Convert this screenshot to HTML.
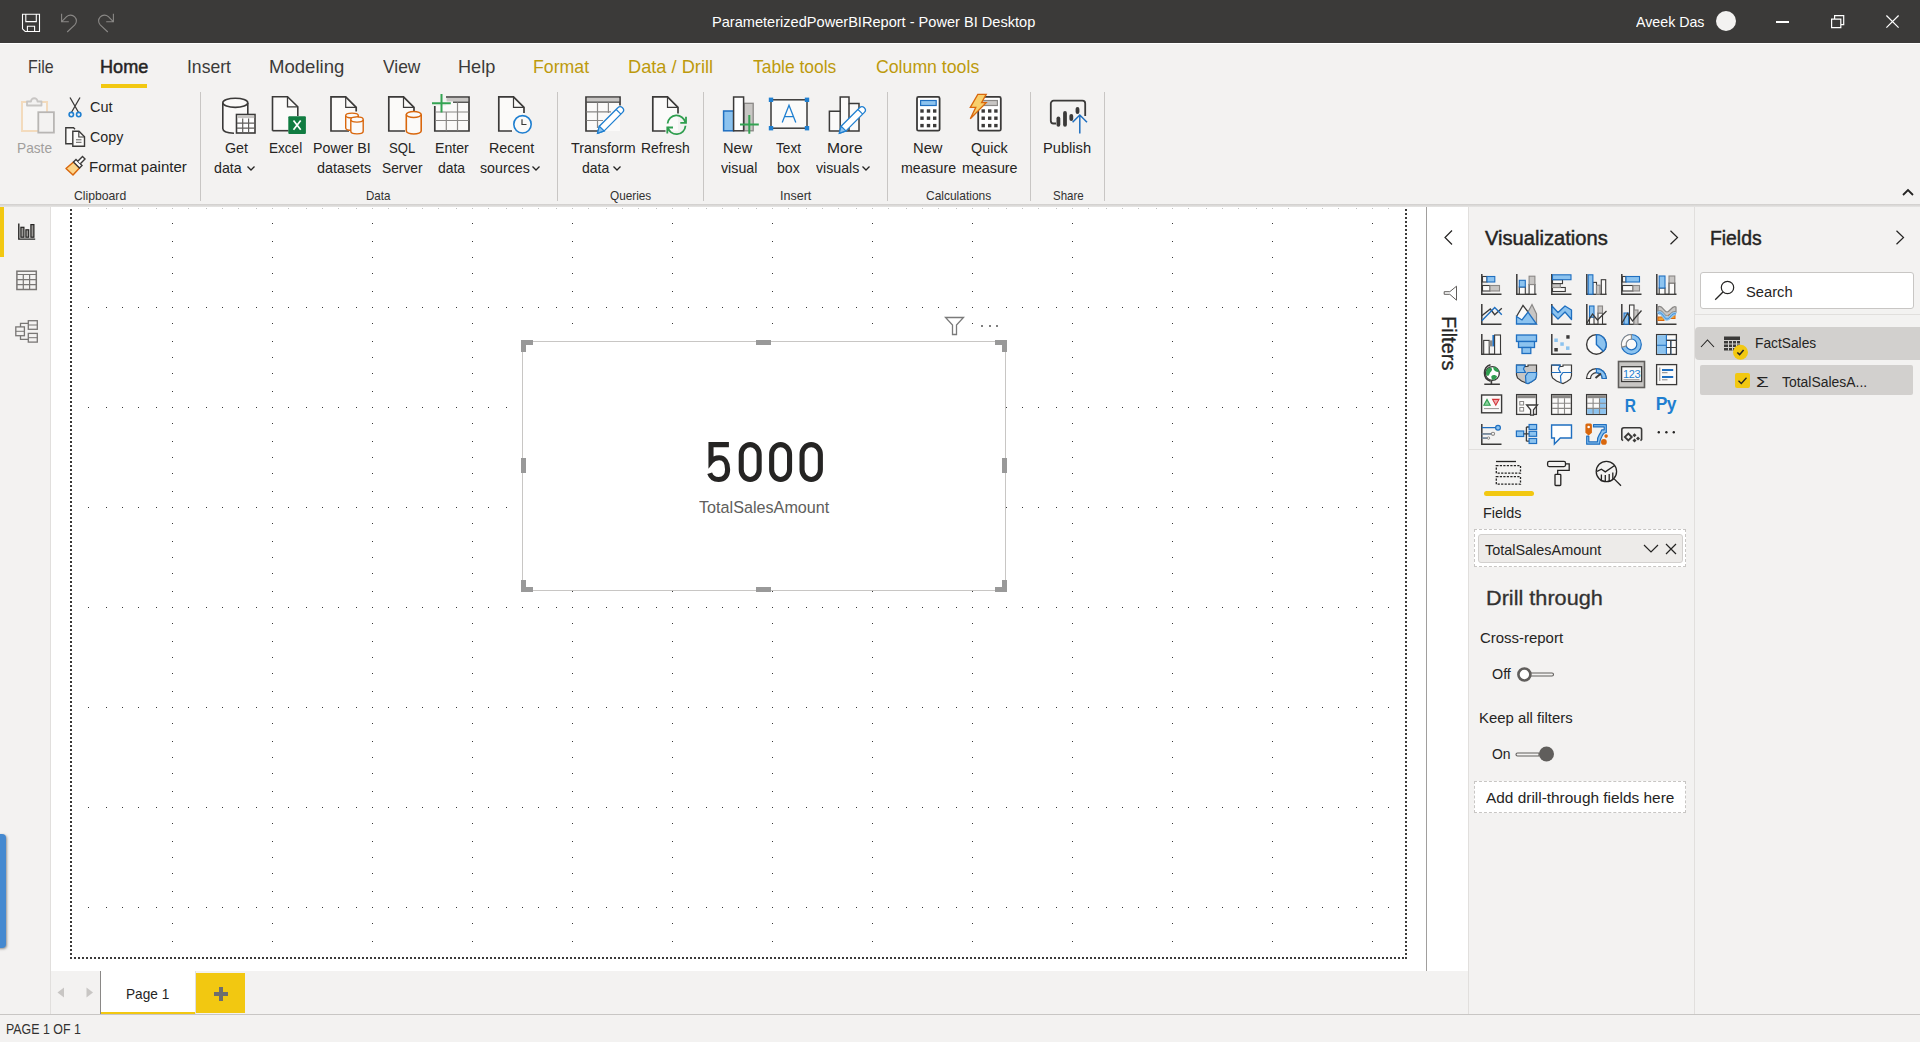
<!DOCTYPE html>
<html><head><meta charset="utf-8"><style>
html,body{margin:0;padding:0;}
body{width:1920px;height:1042px;overflow:hidden;position:relative;background:#f3f2f1;font-family:"Liberation Sans", sans-serif;}
svg{overflow:visible}
</style></head><body>
<div style="position:absolute;left:0px;top:0px;width:1920px;height:43px;background:#3b3a39"></div><div style="position:absolute;left:0px;top:43px;width:1920px;height:1px;background:#ffffff"></div><div id="t1" style="position:absolute;left:712.03px;top:14.30px;font-size:15px;line-height:15px;color:#ffffff;font-weight:400;white-space:nowrap;transform:scaleX(0.9719);transform-origin:0 0;">ParameterizedPowerBIReport - Power BI Desktop</div><div id="t2" style="position:absolute;left:1636.00px;top:14.30px;font-size:15px;line-height:15px;color:#ffffff;font-weight:400;white-space:nowrap;transform:scaleX(0.9476);transform-origin:0 0;">Aveek Das</div><div style="position:absolute;left:1716px;top:11px;width:20px;height:20px;border-radius:50%;background:#f3f2f1"></div><svg style="position:absolute;left:0px;top:0px;" width="1" height="1" viewBox="0 0 1 1"><path d="M22.5 14.3H39.5V31.5H25.2L22.5 28.8Z M25.8 14.3V21.6H36.3V14.3 M27.4 31.5V26.3H34.6V31.5" fill="none" stroke="#fff" stroke-width="1.1"/></svg><svg style="position:absolute;left:0px;top:0px;" width="1" height="1" viewBox="0 0 1 1"><path d="M61.6 13.8V21.7H68.8M61.7 21.6L66.6 16.7A5.8 5.8 0 0 1 74.8 24.9L67.2 32" fill="none" stroke="#8a8886" stroke-width="1.1"/></svg><svg style="position:absolute;left:0px;top:0px;" width="1" height="1" viewBox="0 0 1 1"><path d="M113.4 13.8V21.7H106.2M113.3 21.6L108.4 16.7A5.8 5.8 0 0 0 100.2 24.9L107.8 32" fill="none" stroke="#8a8886" stroke-width="1.1"/></svg><div style="position:absolute;left:1776px;top:21px;width:13.4px;height:1.6px;background:#fff"></div><svg style="position:absolute;left:0px;top:0px;" width="1" height="1" viewBox="0 0 1 1"><path d="M831.6 19.2h9.2v8.4h-9.2z M834.6 19.2v-3.6h9.1v9.1h-2.9" transform="translate(1000 0)" fill="none" stroke="#fff" stroke-width="1.2"/></svg><svg style="position:absolute;left:0px;top:0px;" width="1" height="1" viewBox="0 0 1 1"><path d="M1886.4 15.5L1898.6 27.6M1898.6 15.5L1886.4 27.6" stroke="#fff" stroke-width="1.2"/></svg><div id="t3" style="position:absolute;left:28.14px;top:58.34px;font-size:18.5px;line-height:18.5px;color:#3b3a39;font-weight:400;white-space:nowrap;transform:scaleX(0.8625);transform-origin:0 0;">File</div><div id="t4" style="position:absolute;left:100.02px;top:58.34px;font-size:18.5px;line-height:18.5px;color:#252423;font-weight:400;white-space:nowrap;transform:scaleX(0.9780);transform-origin:0 0;-webkit-text-stroke:0.5px #252423;">Home</div><div style="position:absolute;left:101px;top:84px;width:46px;height:4px;background:#f2c811"></div><div id="t5" style="position:absolute;left:186.55px;top:58.34px;font-size:18.5px;line-height:18.5px;color:#3b3a39;font-weight:400;white-space:nowrap;transform:scaleX(0.9484);transform-origin:0 0;">Insert</div><div id="t6" style="position:absolute;left:269.00px;top:58.34px;font-size:18.5px;line-height:18.5px;color:#3b3a39;font-weight:400;white-space:nowrap;transform:scaleX(1.0029);transform-origin:0 0;">Modeling</div><div id="t7" style="position:absolute;left:383.00px;top:58.34px;font-size:18.5px;line-height:18.5px;color:#3b3a39;font-weight:400;white-space:nowrap;transform:scaleX(0.9405);transform-origin:0 0;">View</div><div id="t8" style="position:absolute;left:458.02px;top:58.34px;font-size:18.5px;line-height:18.5px;color:#3b3a39;font-weight:400;white-space:nowrap;transform:scaleX(0.9794);transform-origin:0 0;">Help</div><div id="t9" style="position:absolute;left:533.04px;top:58.34px;font-size:18.5px;line-height:18.5px;color:#bd9a0c;font-weight:400;white-space:nowrap;transform:scaleX(0.9574);transform-origin:0 0;">Format</div><div id="t10" style="position:absolute;left:628.01px;top:58.34px;font-size:18.5px;line-height:18.5px;color:#bd9a0c;font-weight:400;white-space:nowrap;transform:scaleX(0.9853);transform-origin:0 0;">Data / Drill</div><div id="t11" style="position:absolute;left:753.00px;top:58.34px;font-size:18.5px;line-height:18.5px;color:#bd9a0c;font-weight:400;white-space:nowrap;transform:scaleX(0.9411);transform-origin:0 0;">Table tools</div><div id="t12" style="position:absolute;left:876.00px;top:58.34px;font-size:18.5px;line-height:18.5px;color:#bd9a0c;font-weight:400;white-space:nowrap;transform:scaleX(0.9562);transform-origin:0 0;">Column tools</div><div style="position:absolute;left:200px;top:92px;width:1px;height:109px;background:#c8c6c4"></div><div style="position:absolute;left:557px;top:92px;width:1px;height:109px;background:#c8c6c4"></div><div style="position:absolute;left:703px;top:92px;width:1px;height:109px;background:#c8c6c4"></div><div style="position:absolute;left:887px;top:92px;width:1px;height:109px;background:#c8c6c4"></div><div style="position:absolute;left:1030px;top:92px;width:1px;height:109px;background:#c8c6c4"></div><div style="position:absolute;left:1104px;top:92px;width:1px;height:109px;background:#c8c6c4"></div><div id="t13" style="position:absolute;left:17.06px;top:140.73px;font-size:14.5px;line-height:14.5px;color:#a19f9d;font-weight:400;white-space:nowrap;transform:scaleX(0.9441);transform-origin:0 0;">Paste</div><div id="t14" style="position:absolute;left:90.00px;top:99.73px;font-size:14.5px;line-height:14.5px;color:#252423;font-weight:400;white-space:nowrap;">Cut</div><div id="t15" style="position:absolute;left:90.00px;top:130.23px;font-size:14.5px;line-height:14.5px;color:#252423;font-weight:400;white-space:nowrap;transform:scaleX(0.9827);transform-origin:0 0;">Copy</div><div id="t16" style="position:absolute;left:88.96px;top:160.23px;font-size:14.5px;line-height:14.5px;color:#252423;font-weight:400;white-space:nowrap;transform:scaleX(1.0379);transform-origin:0 0;">Format painter</div><div id="t17" style="position:absolute;left:74.00px;top:188.50px;font-size:13px;line-height:13px;color:#323130;font-weight:400;white-space:nowrap;transform:scaleX(0.9384);transform-origin:0 0;">Clipboard</div><div id="t18" style="position:absolute;left:224.50px;top:140.73px;font-size:14.5px;line-height:14.5px;color:#252423;font-weight:400;white-space:nowrap;transform:scaleX(0.9853);transform-origin:0 0;">Get</div><div id="t19" style="position:absolute;left:214.00px;top:160.73px;font-size:14.5px;line-height:14.5px;color:#252423;font-weight:400;white-space:nowrap;transform:scaleX(0.9775);transform-origin:0 0;">data</div><div id="t20" style="position:absolute;left:269.07px;top:140.73px;font-size:14.5px;line-height:14.5px;color:#252423;font-weight:400;white-space:nowrap;transform:scaleX(0.9347);transform-origin:0 0;">Excel</div><div id="t21" style="position:absolute;left:313.02px;top:140.73px;font-size:14.5px;line-height:14.5px;color:#252423;font-weight:400;white-space:nowrap;transform:scaleX(0.9806);transform-origin:0 0;">Power BI</div><div id="t22" style="position:absolute;left:317.00px;top:160.73px;font-size:14.5px;line-height:14.5px;color:#252423;font-weight:400;white-space:nowrap;transform:scaleX(0.9897);transform-origin:0 0;">datasets</div><div id="t23" style="position:absolute;left:389.00px;top:140.73px;font-size:14.5px;line-height:14.5px;color:#252423;font-weight:400;white-space:nowrap;transform:scaleX(0.9050);transform-origin:0 0;">SQL</div><div id="t24" style="position:absolute;left:382.00px;top:160.73px;font-size:14.5px;line-height:14.5px;color:#252423;font-weight:400;white-space:nowrap;transform:scaleX(0.9492);transform-origin:0 0;">Server</div><div id="t25" style="position:absolute;left:435.02px;top:140.73px;font-size:14.5px;line-height:14.5px;color:#252423;font-weight:400;white-space:nowrap;transform:scaleX(0.9755);transform-origin:0 0;">Enter</div><div id="t26" style="position:absolute;left:438.00px;top:160.73px;font-size:14.5px;line-height:14.5px;color:#252423;font-weight:400;white-space:nowrap;transform:scaleX(0.9603);transform-origin:0 0;">data</div><div id="t27" style="position:absolute;left:366.11px;top:188.50px;font-size:13px;line-height:13px;color:#323130;font-weight:400;white-space:nowrap;transform:scaleX(0.8887);transform-origin:0 0;">Data</div><div id="t28" style="position:absolute;left:489.02px;top:140.73px;font-size:14.5px;line-height:14.5px;color:#252423;font-weight:400;white-space:nowrap;transform:scaleX(0.9841);transform-origin:0 0;">Recent</div><div id="t29" style="position:absolute;left:480.00px;top:160.73px;font-size:14.5px;line-height:14.5px;color:#252423;font-weight:400;white-space:nowrap;transform:scaleX(0.9798);transform-origin:0 0;">sources</div><div id="t30" style="position:absolute;left:571.00px;top:140.73px;font-size:14.5px;line-height:14.5px;color:#252423;font-weight:400;white-space:nowrap;transform:scaleX(0.9855);transform-origin:0 0;">Transform</div><div id="t31" style="position:absolute;left:582.00px;top:160.73px;font-size:14.5px;line-height:14.5px;color:#252423;font-weight:400;white-space:nowrap;transform:scaleX(0.9672);transform-origin:0 0;">data</div><div id="t32" style="position:absolute;left:641.04px;top:140.73px;font-size:14.5px;line-height:14.5px;color:#252423;font-weight:400;white-space:nowrap;transform:scaleX(0.9596);transform-origin:0 0;">Refresh</div><div id="t33" style="position:absolute;left:609.50px;top:188.50px;font-size:13px;line-height:13px;color:#323130;font-weight:400;white-space:nowrap;transform:scaleX(0.9061);transform-origin:0 0;">Queries</div><div id="t34" style="position:absolute;left:722.99px;top:140.73px;font-size:14.5px;line-height:14.5px;color:#252423;font-weight:400;white-space:nowrap;transform:scaleX(1.0058);transform-origin:0 0;">New</div><div id="t35" style="position:absolute;left:720.50px;top:160.73px;font-size:14.5px;line-height:14.5px;color:#252423;font-weight:400;white-space:nowrap;transform:scaleX(0.9824);transform-origin:0 0;">visual</div><div id="t36" style="position:absolute;left:776.00px;top:140.73px;font-size:14.5px;line-height:14.5px;color:#252423;font-weight:400;white-space:nowrap;transform:scaleX(0.9411);transform-origin:0 0;">Text</div><div id="t37" style="position:absolute;left:777.00px;top:160.73px;font-size:14.5px;line-height:14.5px;color:#252423;font-weight:400;white-space:nowrap;transform:scaleX(0.9740);transform-origin:0 0;">box</div><div id="t38" style="position:absolute;left:826.92px;top:140.73px;font-size:14.5px;line-height:14.5px;color:#252423;font-weight:400;white-space:nowrap;transform:scaleX(1.0791);transform-origin:0 0;">More</div><div id="t39" style="position:absolute;left:816.00px;top:160.73px;font-size:14.5px;line-height:14.5px;color:#252423;font-weight:400;white-space:nowrap;transform:scaleX(0.9757);transform-origin:0 0;">visuals</div><div id="t40" style="position:absolute;left:779.54px;top:188.50px;font-size:13px;line-height:13px;color:#323130;font-weight:400;white-space:nowrap;transform:scaleX(0.9624);transform-origin:0 0;">Insert</div><div id="t41" style="position:absolute;left:912.98px;top:140.73px;font-size:14.5px;line-height:14.5px;color:#252423;font-weight:400;white-space:nowrap;transform:scaleX(1.0163);transform-origin:0 0;">New</div><div id="t42" style="position:absolute;left:901.00px;top:160.73px;font-size:14.5px;line-height:14.5px;color:#252423;font-weight:400;white-space:nowrap;transform:scaleX(0.9760);transform-origin:0 0;">measure</div><div id="t43" style="position:absolute;left:971.00px;top:140.73px;font-size:14.5px;line-height:14.5px;color:#252423;font-weight:400;white-space:nowrap;transform:scaleX(0.9917);transform-origin:0 0;">Quick</div><div id="t44" style="position:absolute;left:962.00px;top:160.73px;font-size:14.5px;line-height:14.5px;color:#252423;font-weight:400;white-space:nowrap;transform:scaleX(0.9849);transform-origin:0 0;">measure</div><div id="t45" style="position:absolute;left:926.00px;top:188.50px;font-size:13px;line-height:13px;color:#323130;font-weight:400;white-space:nowrap;transform:scaleX(0.9213);transform-origin:0 0;">Calculations</div><div id="t46" style="position:absolute;left:1042.99px;top:140.73px;font-size:14.5px;line-height:14.5px;color:#252423;font-weight:400;white-space:nowrap;transform:scaleX(1.0109);transform-origin:0 0;">Publish</div><div id="t47" style="position:absolute;left:1052.50px;top:188.50px;font-size:13px;line-height:13px;color:#323130;font-weight:400;white-space:nowrap;transform:scaleX(0.8851);transform-origin:0 0;">Share</div><svg style="position:absolute;left:246.5px;top:166px;" width="8" height="5" viewBox="0 0 8 5"><path d="M0.5 0.5L4 4L7.5 0.5" fill="none" stroke="#252423" stroke-width="1.3"/></svg><svg style="position:absolute;left:532px;top:166px;" width="8" height="5" viewBox="0 0 8 5"><path d="M0.5 0.5L4 4L7.5 0.5" fill="none" stroke="#252423" stroke-width="1.3"/></svg><svg style="position:absolute;left:613px;top:166px;" width="8" height="5" viewBox="0 0 8 5"><path d="M0.5 0.5L4 4L7.5 0.5" fill="none" stroke="#252423" stroke-width="1.3"/></svg><svg style="position:absolute;left:862px;top:166px;" width="8" height="5" viewBox="0 0 8 5"><path d="M0.5 0.5L4 4L7.5 0.5" fill="none" stroke="#252423" stroke-width="1.3"/></svg><svg style="position:absolute;left:1902px;top:188px;" width="12" height="8" viewBox="0 0 12 8"><path d="M1 7L6 2L11 7" fill="none" stroke="#252423" stroke-width="1.8"/></svg><div style="position:absolute;left:0px;top:204px;width:1920px;height:3px;background:linear-gradient(#d0cecc,#e6e5e4)"></div><div style="position:absolute;left:0px;top:207px;width:50px;height:807px;background:#f3f2f1"></div><div style="position:absolute;left:50px;top:207px;width:1px;height:807px;background:#e1dfdd"></div><div style="position:absolute;left:0px;top:207px;width:4px;height:50px;background:#f2c811"></div><div style="position:absolute;left:51px;top:207px;width:1375px;height:764px;background:#ffffff"></div><div style="position:absolute;left:1426px;top:207px;width:1px;height:764px;background:#a19f9d"></div><div style="position:absolute;left:1427px;top:207px;width:41px;height:807px;background:#ffffff"></div><div style="position:absolute;left:51px;top:971px;width:1376px;height:43px;background:#f3f2f1"></div><div style="position:absolute;left:1427px;top:971px;width:41px;height:43px;background:#f3f2f1"></div><div style="position:absolute;left:1468px;top:207px;width:1px;height:807px;background:#e1dfdd"></div><div style="position:absolute;left:0px;top:1014px;width:1920px;height:1px;background:#c8c6c4"></div><div id="t48" style="position:absolute;left:6.13px;top:1021.90px;font-size:14.3px;line-height:14.3px;color:#323130;font-weight:400;white-space:nowrap;transform:scaleX(0.8666);transform-origin:0 0;">PAGE 1 OF 1</div><div style="position:absolute;left:1694px;top:207px;width:1px;height:807px;background:#e1dfdd"></div><div id="t49" style="position:absolute;left:1484.50px;top:228.07px;font-size:20px;line-height:20px;color:#252423;font-weight:400;white-space:nowrap;transform:scaleX(1.0072);transform-origin:0 0;-webkit-text-stroke:0.45px #252423;">Visualizations</div><div id="t50" style="position:absolute;left:1710.03px;top:228.07px;font-size:20px;line-height:20px;color:#252423;font-weight:400;white-space:nowrap;transform:scaleX(0.9666);transform-origin:0 0;-webkit-text-stroke:0.45px #252423;">Fields</div><svg style="position:absolute;left:1669px;top:230px;" width="10" height="15" viewBox="0 0 10 15"><path d="M1.5 0.8L8.5 7.5L1.5 14.2" fill="none" stroke="#252423" stroke-width="1.2"/></svg><svg style="position:absolute;left:1895px;top:230px;" width="10" height="15" viewBox="0 0 10 15"><path d="M1.5 0.8L8.5 7.5L1.5 14.2" fill="none" stroke="#252423" stroke-width="1.2"/></svg><svg style="position:absolute;left:0;top:0" width="1920" height="1042"><defs><pattern id="grid" x="72" y="207" width="100" height="100" patternUnits="userSpaceOnUse"><g fill="#383838"><rect x="0" y="0" width="1" height="1"/><rect x="16" y="0" width="1" height="1"/><rect x="34" y="0" width="1" height="1"/><rect x="50" y="0" width="1" height="1"/><rect x="66" y="0" width="1" height="1"/><rect x="84" y="0" width="1" height="1"/><rect x="0" y="16" width="1" height="1"/><rect x="0" y="34" width="1" height="1"/><rect x="0" y="50" width="1" height="1"/><rect x="0" y="66" width="1" height="1"/><rect x="0" y="84" width="1" height="1"/></g></pattern></defs><rect x="74" y="209" width="1330" height="746" fill="url(#grid)"/></svg><svg style="position:absolute;left:0;top:0" width="1920" height="1042"><g fill="#c0c0c0"><rect x="88" y="208" width="1" height="1"/><rect x="106" y="208" width="1" height="1"/><rect x="122" y="208" width="1" height="1"/><rect x="138" y="208" width="1" height="1"/><rect x="156" y="208" width="1" height="1"/><rect x="172" y="208" width="1" height="1"/><rect x="188" y="208" width="1" height="1"/><rect x="206" y="208" width="1" height="1"/><rect x="222" y="208" width="1" height="1"/><rect x="238" y="208" width="1" height="1"/><rect x="256" y="208" width="1" height="1"/><rect x="272" y="208" width="1" height="1"/><rect x="288" y="208" width="1" height="1"/><rect x="306" y="208" width="1" height="1"/><rect x="322" y="208" width="1" height="1"/><rect x="338" y="208" width="1" height="1"/><rect x="356" y="208" width="1" height="1"/><rect x="372" y="208" width="1" height="1"/><rect x="388" y="208" width="1" height="1"/><rect x="406" y="208" width="1" height="1"/><rect x="422" y="208" width="1" height="1"/><rect x="438" y="208" width="1" height="1"/><rect x="456" y="208" width="1" height="1"/><rect x="472" y="208" width="1" height="1"/><rect x="488" y="208" width="1" height="1"/><rect x="506" y="208" width="1" height="1"/><rect x="522" y="208" width="1" height="1"/><rect x="538" y="208" width="1" height="1"/><rect x="556" y="208" width="1" height="1"/><rect x="572" y="208" width="1" height="1"/><rect x="588" y="208" width="1" height="1"/><rect x="606" y="208" width="1" height="1"/><rect x="622" y="208" width="1" height="1"/><rect x="638" y="208" width="1" height="1"/><rect x="656" y="208" width="1" height="1"/><rect x="672" y="208" width="1" height="1"/><rect x="688" y="208" width="1" height="1"/><rect x="706" y="208" width="1" height="1"/><rect x="722" y="208" width="1" height="1"/><rect x="738" y="208" width="1" height="1"/><rect x="756" y="208" width="1" height="1"/><rect x="772" y="208" width="1" height="1"/><rect x="788" y="208" width="1" height="1"/><rect x="806" y="208" width="1" height="1"/><rect x="822" y="208" width="1" height="1"/><rect x="838" y="208" width="1" height="1"/><rect x="856" y="208" width="1" height="1"/><rect x="872" y="208" width="1" height="1"/><rect x="888" y="208" width="1" height="1"/><rect x="906" y="208" width="1" height="1"/><rect x="922" y="208" width="1" height="1"/><rect x="938" y="208" width="1" height="1"/><rect x="956" y="208" width="1" height="1"/><rect x="972" y="208" width="1" height="1"/><rect x="988" y="208" width="1" height="1"/><rect x="1006" y="208" width="1" height="1"/><rect x="1022" y="208" width="1" height="1"/><rect x="1038" y="208" width="1" height="1"/><rect x="1056" y="208" width="1" height="1"/><rect x="1072" y="208" width="1" height="1"/><rect x="1088" y="208" width="1" height="1"/><rect x="1106" y="208" width="1" height="1"/><rect x="1122" y="208" width="1" height="1"/><rect x="1138" y="208" width="1" height="1"/><rect x="1156" y="208" width="1" height="1"/><rect x="1172" y="208" width="1" height="1"/><rect x="1188" y="208" width="1" height="1"/><rect x="1206" y="208" width="1" height="1"/><rect x="1222" y="208" width="1" height="1"/><rect x="1238" y="208" width="1" height="1"/><rect x="1256" y="208" width="1" height="1"/><rect x="1272" y="208" width="1" height="1"/><rect x="1288" y="208" width="1" height="1"/><rect x="1306" y="208" width="1" height="1"/><rect x="1322" y="208" width="1" height="1"/><rect x="1338" y="208" width="1" height="1"/><rect x="1356" y="208" width="1" height="1"/><rect x="1372" y="208" width="1" height="1"/><rect x="1388" y="208" width="1" height="1"/></g></svg><div style="position:absolute;left:70px;top:209px;width:2px;height:751px;background:repeating-linear-gradient(to bottom,#3b3a39 0 2px,transparent 2px 4px)"></div><div style="position:absolute;left:1405px;top:209px;width:2px;height:751px;background:repeating-linear-gradient(to bottom,#3b3a39 0 2px,transparent 2px 4px)"></div><div style="position:absolute;left:70px;top:957px;width:1337px;height:2px;background:repeating-linear-gradient(to right,#3b3a39 0 2px,transparent 2px 4px)"></div><div style="position:absolute;left:522px;top:341px;width:484px;height:250px;background:#fff;box-sizing:border-box;border:1px solid #c8c6c4"></div><div style="position:absolute;left:521px;top:340px;width:5px;height:12px;background:#999999"></div><div style="position:absolute;left:521px;top:340px;width:12px;height:5px;background:#999999"></div><div style="position:absolute;left:1002px;top:340px;width:5px;height:12px;background:#999999"></div><div style="position:absolute;left:995px;top:340px;width:12px;height:5px;background:#999999"></div><div style="position:absolute;left:521px;top:580px;width:5px;height:12px;background:#999999"></div><div style="position:absolute;left:521px;top:587px;width:12px;height:5px;background:#999999"></div><div style="position:absolute;left:1002px;top:580px;width:5px;height:12px;background:#999999"></div><div style="position:absolute;left:995px;top:587px;width:12px;height:5px;background:#999999"></div><div style="position:absolute;left:756px;top:340px;width:15px;height:5px;background:#999999"></div><div style="position:absolute;left:756px;top:587px;width:15px;height:5px;background:#999999"></div><div style="position:absolute;left:521px;top:458px;width:5px;height:15px;background:#999999"></div><div style="position:absolute;left:1002px;top:458px;width:5px;height:15px;background:#999999"></div><svg style="position:absolute;left:944px;top:316px;" width="22" height="20" viewBox="0 0 22 20"><path d="M1.5 1.5H19.5L12.5 9V18.5H8.5V9Z" fill="none" stroke="#7a7a7a" stroke-width="1.3" stroke-linejoin="miter"/></svg><div style="position:absolute;left:981px;top:325px;width:2.4px;height:2.4px;border-radius:50%;background:#555"></div><div style="position:absolute;left:988.5px;top:325px;width:2.4px;height:2.4px;border-radius:50%;background:#555"></div><div style="position:absolute;left:996px;top:325px;width:2.4px;height:2.4px;border-radius:50%;background:#555"></div><svg style="position:absolute;left:0px;top:0px;" width="1" height="1" viewBox="0 0 1 1"><g fill="none" stroke="#252423" stroke-width="5.1"><path d="M728.9 444.6H711V461.5C713 459 716 457.8 719.2 457.8C724.6 457.8 727.6 462.8 727.6 469.6C727.6 476.3 724 479.5 718.6 479.5C714.2 479.5 711 477.3 709.7 473.3"/><rect x="741.25" y="444.6" width="17.9" height="34.9" rx="8.95" ry="10"/><rect x="771.65" y="444.6" width="17.9" height="34.9" rx="8.95" ry="10"/><rect x="802.05" y="444.6" width="18.3" height="34.9" rx="9.1" ry="10"/></g></svg><div id="t51" style="position:absolute;left:698.50px;top:499.27px;font-size:17.4px;line-height:17.4px;color:#605e5c;font-weight:400;white-space:nowrap;transform:scaleX(0.9299);transform-origin:0 0;">TotalSalesAmount</div><svg style="position:absolute;left:1444px;top:230px;" width="9" height="15" viewBox="0 0 9 15"><path d="M8 0.5L1 7.5L8 14.5" fill="none" stroke="#252423" stroke-width="1.2"/></svg><svg style="position:absolute;left:1443px;top:285px;" width="15" height="17" viewBox="0 0 15 17"><path d="M13.5 1.2V15.2L6.8 9.3H1.2V6.7H6.8Z" fill="none" stroke="#605e5c" stroke-width="1"/></svg><div style="position:absolute;left:1459px;top:315.8px;transform:rotate(90deg);transform-origin:0 0;font-size:20px;line-height:20px;color:#252423;white-space:nowrap;-webkit-text-stroke:0.35px #252423">Filters</div><svg style="position:absolute;left:0px;top:0px;" width="1" height="1" viewBox="0 0 1 1"><path d="M18.8 223.4V239.1H35.2" fill="none" stroke="#252423" stroke-width="1.4"/><g fill="#9a9896" stroke="#252423" stroke-width="1.2"><rect x="20.9" y="227.3" width="3" height="9.9"/><rect x="25.9" y="229.8" width="2.8" height="7.4"/><rect x="30.9" y="224.6" width="3" height="12.6"/></g></svg><svg style="position:absolute;left:0px;top:0px;" width="1" height="1" viewBox="0 0 1 1"><rect x="16.9" y="271.2" width="19.4" height="18.3" fill="none" stroke="#797775" stroke-width="1.5"/><path d="M16.9 274.5H36.3M16.9 279.6H36.3M16.9 284.6H36.3M23.3 274.5V289.5M29.6 274.5V289.5" stroke="#797775" stroke-width="1.2"/></svg><svg style="position:absolute;left:0px;top:0px;" width="1" height="1" viewBox="0 0 1 1"><g fill="none" stroke="#797775" stroke-width="1.3"><path d="M20.5 326.9V323.3H28.3M20.5 335.7V339.4H28.3"/><rect x="15.8" y="326.9" width="8.6" height="8.8"/><rect x="28.3" y="320.7" width="9" height="8.6"/><rect x="28.3" y="333.4" width="9" height="8.7"/></g><path d="M15.8 331.3H24.4M28.3 325H37.3M28.3 337.7H37.3" stroke="#797775" stroke-width="1"/></svg><div style="position:absolute;left:-10px;top:834px;width:15.5px;height:114px;border-radius:4px;background:#4589d0;box-shadow:1px 1px 2.5px rgba(0,0,0,0.4)"></div><svg style="position:absolute;left:57px;top:987px;" width="8" height="11" viewBox="0 0 8 11"><path d="M7 0.5V10.5L0.5 5.5Z" fill="#c8c6c4"/></svg><svg style="position:absolute;left:86px;top:987px;" width="8" height="11" viewBox="0 0 8 11"><path d="M0.5 0.5V10.5L7 5.5Z" fill="#c8c6c4"/></svg><div style="position:absolute;left:100px;top:971px;width:96px;height:43px;background:#fff"></div><div style="position:absolute;left:100px;top:971px;width:1px;height:43px;background:#8a8886"></div><div style="position:absolute;left:195px;top:971px;width:1px;height:43px;background:#e1dfdd"></div><div style="position:absolute;left:101px;top:1012px;width:94px;height:2px;background:#f2c811"></div><div id="t52" style="position:absolute;left:126.09px;top:986.30px;font-size:15px;line-height:15px;color:#252423;font-weight:400;white-space:nowrap;transform:scaleX(0.9091);transform-origin:0 0;">Page 1</div><div style="position:absolute;left:196px;top:973px;width:49px;height:40px;background:#f2c811"></div><div style="position:absolute;left:213.5px;top:991.5px;width:14px;height:4px;background:#6e6e6e"></div><div style="position:absolute;left:218.5px;top:986.5px;width:4px;height:14px;background:#6e6e6e"></div><svg style="position:absolute;left:0;top:0" width="1920" height="1042"><rect x="22" y="102" width="25" height="29" fill="#f7f6f5" stroke="#f3dbbd" stroke-width="2"/><path d="M27 105.5V101.5H31A3.2 3.2 0 0 1 37.5 101.5H41.5V105.5Z" fill="#f3f2f1" stroke="#c8c6c4" stroke-width="1.8" stroke-linejoin="round"/><rect x="38.3" y="112.2" width="15.6" height="20.4" fill="#f3f2f1" stroke="#b8b6b4" stroke-width="1.8"/><path d="M70 97.5L78.6 112.5M80 97.5L71.4 112.5" stroke="#3b3a39" stroke-width="1.3"/><circle cx="71.3" cy="114.6" r="2.2" fill="none" stroke="#1f7fd0" stroke-width="1.6"/><circle cx="78.7" cy="114.6" r="2.2" fill="none" stroke="#1f7fd0" stroke-width="1.6"/><path d="M65.8 143.8V127.8H73.5L75 129.3V143.8Z" fill="#fbfaf9"/><path d="M72.5 143.8H65.8V127.8H73.5L75 129.3" fill="none" stroke="#3b3a39" stroke-width="1.4"/><path d="M72.8 146.2V131.3H79L84.5 136.8V146.2Z" fill="#fbfaf9" stroke="#3b3a39" stroke-width="1.4" stroke-linejoin="miter"/><path d="M78.8 131.3V137H84.5" fill="none" stroke="#3b3a39" stroke-width="1.1"/><path d="M76 139.8H81.5M76 142.3H81.5" stroke="#605e5c" stroke-width="1"/><path d="M66 168.5L73.5 162L79.5 168L73 175Z" fill="#fcd58a" stroke="#d9670d" stroke-width="1.5" stroke-linejoin="round"/><path d="M73.5 162L76 159.5L82 165.5L79.5 168Z" fill="#fff" stroke="#3b3a39" stroke-width="1.4"/><path d="M77.8 161.2L82.5 156.5L85 159L80.3 163.7" fill="#fff" stroke="#3b3a39" stroke-width="1.4"/><path d="M222.8 103V128.5C222.8 131.5 228 133.3 235 133.3H247.8V103Z" fill="#fbfaf9"/><path d="M222.8 103V128.5C222.8 131.5 228 133 234 133.3M247.8 103V114" fill="none" stroke="#3b3a39" stroke-width="1.6"/><ellipse cx="235.3" cy="102.8" rx="12.5" ry="4.6" fill="#fbfaf9" stroke="#3b3a39" stroke-width="1.6"/><rect x="236.5" y="114.5" width="18.5" height="18.5" fill="#fff" stroke="#3b3a39" stroke-width="1.6"/><rect x="237.3" y="115.3" width="16.9" height="2.8" fill="#c8c6c4"/><path d="M237 123.2H254.5M237 128.2H254.5M242.7 118.5V132.5M248.6 118.5V132.5" stroke="#605e5c" stroke-width="1.2"/><path d="M272.5 130.7V96.8H287.5L297.8 106.8V130.7Z" fill="#fbfaf9"/><path d="M272.5 130.7V96.8H287.5L297.8 106.8V116" fill="none" stroke="#3b3a39" stroke-width="1.6"/><path d="M287.5 96.8V106.8H297.8" fill="none" stroke="#3b3a39" stroke-width="1.3"/><path d="M272.5 130.7H288.5" stroke="#3b3a39" stroke-width="1.6"/><rect x="288.3" y="116.3" width="17.6" height="17.6" rx="1" fill="#107c41"/><path d="M293.5 120.5L300.7 129.7M300.7 120.5L293.5 129.7" stroke="#fff" stroke-width="1.7"/><path d="M331 131V96.8H345.7L356.2 107.3V131Z" fill="#fbfaf9"/><path d="M349 131H331V96.8H345.7L356.2 107.3V111.5" fill="none" stroke="#3b3a39" stroke-width="1.7" stroke-linejoin="miter"/><path d="M345.7 96.8V107.3H356.2" fill="none" stroke="#3b3a39" stroke-width="1.2"/><path d="M345.7 115.5V128A6.300000000000011 2.4 0 0 0 358.3 128V115.5" fill="#fbfaf9" stroke="#d9670d" stroke-width="1.4"/><ellipse cx="352.0" cy="115.5" rx="6.300000000000011" ry="2.4" fill="#fbfaf9" stroke="#d9670d" stroke-width="1.4"/><path d="M350.8 119.5V131.3A6.199999999999989 2.6 0 0 0 363.2 131.3V119.5" fill="#fbfaf9" stroke="#d9670d" stroke-width="1.4"/><ellipse cx="357.0" cy="119.5" rx="6.199999999999989" ry="2.6" fill="#fbfaf9" stroke="#d9670d" stroke-width="1.4"/><path d="M388.8 131V96.8H403.5L414 107.3V131Z" fill="#fbfaf9"/><path d="M405 131H388.8V96.8H403.5L414 107.3V111" fill="none" stroke="#3b3a39" stroke-width="1.7" stroke-linejoin="miter"/><path d="M403.5 96.8V107.3H414" fill="none" stroke="#3b3a39" stroke-width="1.2"/><path d="M406.3 114.5V131A7.449999999999989 3.0 0 0 0 421.2 131V114.5" fill="#fbfaf9" stroke="#d9670d" stroke-width="1.6"/><ellipse cx="413.75" cy="114.5" rx="7.449999999999989" ry="3.0" fill="#fbfaf9" stroke="#d9670d" stroke-width="1.6"/><path d="M446 97H469V131H434.8V106H446Z" fill="#fbfaf9"/><path d="M446 97H469V131H434.8V106" fill="none" stroke="#3b3a39" stroke-width="1.7"/><rect x="446.5" y="98" width="21.7" height="3.5" fill="#c8c6c4"/><path d="M453 102.2H468.5" stroke="#3b3a39" stroke-width="1.3"/><path d="M435.5 112H468.5M435.5 120.5H468.5M446.3 112V130.5M457.5 102.5V130.5" stroke="#8a8886" stroke-width="1.2"/><path d="M432 103.3H450.8M441.5 94V112.6" stroke="#33a352" stroke-width="2"/><path d="M498.8 131V96.8H513.5L524 107.3V131Z" fill="#fbfaf9"/><path d="M512 131H498.8V96.8H513.5L524 107.3V113" fill="none" stroke="#3b3a39" stroke-width="1.7" stroke-linejoin="miter"/><path d="M513.5 96.8V107.3H524" fill="none" stroke="#3b3a39" stroke-width="1.2"/><circle cx="522.5" cy="124.3" r="8.7" fill="#fbfaf9" stroke="#1f7fd0" stroke-width="1.6"/><path d="M522 119.3V124.5H526.5" fill="none" stroke="#3b3a39" stroke-width="1.2"/><path d="M586 131V97H620V131Z" fill="#fbfaf9"/><path d="M603 131H586V97H620V105.5" fill="none" stroke="#3b3a39" stroke-width="1.7"/><rect x="586.9" y="97.9" width="32.3" height="3.6" fill="#c8c6c4"/><path d="M586.5 102.2H619.5" stroke="#3b3a39" stroke-width="1.2"/><path d="M586.5 111.8H611M586.5 120.5H603M597.5 102.5V128M608.4 102.5V113" stroke="#8a8886" stroke-width="1.2"/><path d="M597.5 133.3L599.3 126.2L617.8 107.8A2.7 2.7 0 0 1 622.6 112.4L604.2 130.9Z" fill="#fff" stroke="#1f7fd0" stroke-width="1.3" stroke-linejoin="round"/><path d="M597.5 133.3L599.3 126.2L604.2 130.9Z" fill="#8cc3ef" stroke="#1f7fd0" stroke-width="1.2"/><path d="M616.2 109.5L620.9 114.2" stroke="#1f7fd0" stroke-width="1.1"/><path d="M652.8 131V96.8H667.5L678 107.3V131Z" fill="#fbfaf9"/><path d="M665.5 131H652.8V96.8H667.5L678 107.3V113.5" fill="none" stroke="#3b3a39" stroke-width="1.7" stroke-linejoin="miter"/><path d="M667.5 96.8V107.3H678" fill="none" stroke="#3b3a39" stroke-width="1.2"/><path d="M667.6 123.5A9 9 0 0 1 685.3 122.3M685.5 125.8A9 9 0 0 1 667.7 127" fill="none" stroke="#2f9e4f" stroke-width="1.8"/><path d="M686 116.8V122.8H680.3M667.3 133.5V127.5H673" fill="none" stroke="#2f9e4f" stroke-width="1.8"/><rect x="723.6" y="111" width="10" height="19.8" fill="#8cc3ef" stroke="#1f6fc0" stroke-width="1.5"/><rect x="744.2" y="103.3" width="9" height="27.5" fill="#c8c6c4" stroke="#8a8886" stroke-width="1.3"/><rect x="733.6" y="97" width="10" height="33.8" fill="#fff" stroke="#3b3a39" stroke-width="1.5"/><rect x="739.5" y="114" width="20" height="20" fill="#f3f2f1" opacity="0"/><path d="M740 124.4H758.8M749.3 115V133.7" stroke="#33a352" stroke-width="2"/><rect x="771" y="99.8" width="36" height="28.4" fill="#fbfaf9" stroke="#3b3a39" stroke-width="1.5"/><rect x="768.8" y="97.6" width="4.4" height="4.4" fill="#1f7fd0"/><rect x="804.8" y="97.6" width="4.4" height="4.4" fill="#1f7fd0"/><rect x="768.8" y="125.99999999999999" width="4.4" height="4.4" fill="#1f7fd0"/><rect x="804.8" y="125.99999999999999" width="4.4" height="4.4" fill="#1f7fd0"/><path d="M782.2 122.5L789 105.3L795.8 122.5M784.6 116.6H793.4" fill="none" stroke="#1f7fd0" stroke-width="1.3"/><path d="M829.4 131V111.2H840.2V97H849V103.6H859V131Z" fill="#fbfaf9" stroke="#3b3a39" stroke-width="1.5"/><path d="M840.2 111.2V131M849 103.6V131" stroke="#3b3a39" stroke-width="1.5"/><path d="M839.3 133.3L841.1 126.2L859.6 107.8A2.7 2.7 0 0 1 864.4 112.4L846 130.9Z" fill="#fff" stroke="#1f7fd0" stroke-width="1.3" stroke-linejoin="round"/><path d="M839.3 133.3L841.1 126.2L846 130.9Z" fill="#8cc3ef" stroke="#1f7fd0" stroke-width="1.2"/><path d="M858 109.5L862.7 114.2" stroke="#1f7fd0" stroke-width="1.1"/><rect x="917.0" y="96.9" width="22.6" height="33.8" rx="1.5" fill="#fff" stroke="#3b3a39" stroke-width="1.8"/><rect x="920.6" y="100.5" width="15.6" height="5" fill="#8cc3ef" stroke="#1f6fc0" stroke-width="1.2"/><rect x="920.3" y="109.3" width="3.4" height="3.4" fill="#3b3a39"/><rect x="920.3" y="116.5" width="3.4" height="3.4" fill="#3b3a39"/><rect x="920.3" y="123.89999999999999" width="3.4" height="3.4" fill="#3b3a39"/><rect x="926.8" y="109.3" width="3.4" height="3.4" fill="#3b3a39"/><rect x="926.8" y="116.5" width="3.4" height="3.4" fill="#3b3a39"/><rect x="926.8" y="123.89999999999999" width="3.4" height="3.4" fill="#3b3a39"/><rect x="933.0" y="109.3" width="3.4" height="3.4" fill="#3b3a39"/><rect x="933.0" y="116.5" width="3.4" height="3.4" fill="#3b3a39"/><rect x="933.0" y="123.89999999999999" width="3.4" height="3.4" fill="#3b3a39"/><rect x="978.1999999999999" y="96.9" width="22.6" height="33.8" rx="1.5" fill="#fff" stroke="#3b3a39" stroke-width="1.8"/><rect x="981.8" y="100.5" width="15.6" height="5" fill="#c8c6c4" stroke="#8a8886" stroke-width="1.2"/><rect x="981.4999999999999" y="109.3" width="3.4" height="3.4" fill="#3b3a39"/><rect x="981.4999999999999" y="116.5" width="3.4" height="3.4" fill="#3b3a39"/><rect x="981.4999999999999" y="123.89999999999999" width="3.4" height="3.4" fill="#3b3a39"/><rect x="987.9999999999999" y="109.3" width="3.4" height="3.4" fill="#3b3a39"/><rect x="987.9999999999999" y="116.5" width="3.4" height="3.4" fill="#3b3a39"/><rect x="987.9999999999999" y="123.89999999999999" width="3.4" height="3.4" fill="#3b3a39"/><rect x="994.1999999999999" y="109.3" width="3.4" height="3.4" fill="#3b3a39"/><rect x="994.1999999999999" y="116.5" width="3.4" height="3.4" fill="#3b3a39"/><rect x="994.1999999999999" y="123.89999999999999" width="3.4" height="3.4" fill="#3b3a39"/><path d="M977.8 94.4H986.2L981.6 102.6H986.2L970.3 118.8L975.8 107.3H970.3Z" fill="#f8cf6c" stroke="#d9670d" stroke-width="1.3" stroke-linejoin="miter"/><path d="M1056 123.5H1053.5A2.8 2.8 0 0 1 1050.8 120.7V103.5A2.8 2.8 0 0 1 1053.6 100.7H1082.4A2.8 2.8 0 0 1 1085.2 103.5V116" fill="none" stroke="#3b3a39" stroke-width="1.8"/><path d="M1058.4 118.5V124.8" stroke="#3b3a39" stroke-width="3.8" stroke-linecap="round"/><path d="M1065 113.0V124.8" stroke="#3b3a39" stroke-width="3.8" stroke-linecap="round"/><path d="M1071.3 116.0V119.0" stroke="#3b3a39" stroke-width="3.8" stroke-linecap="round"/><path d="M1077.5 109.0V112.0" stroke="#3b3a39" stroke-width="3.8" stroke-linecap="round"/><path d="M1079.8 133.5V115M1072.6 122.2L1079.8 115L1087 122.2" fill="none" stroke="#1f6fc0" stroke-width="1.5"/></svg><svg style="position:absolute;left:0;top:0" width="1920" height="1042"><g transform="translate(1481 274)"><path d="M0.8 0V20.2H20.5" fill="none" stroke="#3b3a39" stroke-width="1.5"/><rect x="1.5" y="2.5" width="4.5" height="5.5" fill="#fbfaf9" stroke="#3b3a39" stroke-width="1.1"/><rect x="6" y="2.5" width="7.8" height="5.5" fill="#8cc3ef" stroke="#1f6fc0" stroke-width="1.1"/><rect x="1.5" y="11.5" width="7.5" height="5.5" fill="#fbfaf9" stroke="#3b3a39" stroke-width="1.1"/><rect x="9" y="11.5" width="9.5" height="5.5" fill="#c8c6c4" stroke="#8a8886" stroke-width="1.1"/></g><g transform="translate(1516 274)"><path d="M0.8 0V20.2H20.5" fill="none" stroke="#3b3a39" stroke-width="1.5"/><rect x="3.3" y="13" width="6" height="7.2" fill="#fbfaf9" stroke="#3b3a39" stroke-width="1.1"/><rect x="3.3" y="6.3" width="6" height="6.7" fill="#8cc3ef" stroke="#1f6fc0" stroke-width="1.1"/><rect x="13.1" y="10.5" width="5.8" height="9.7" fill="#fbfaf9" stroke="#3b3a39" stroke-width="1.1"/><rect x="13.1" y="2.2" width="5.8" height="8.3" fill="#c8c6c4" stroke="#8a8886" stroke-width="1.1"/></g><g transform="translate(1551 274)"><path d="M0.8 0V20.2H20.5" fill="none" stroke="#3b3a39" stroke-width="1.5"/><rect x="1.5" y="13.5" width="12.8" height="4" fill="#fbfaf9" stroke="#3b3a39" stroke-width="1.1"/><rect x="1.5" y="9.6" width="7.8" height="3.9" fill="#c8c6c4" stroke="#8a8886" stroke-width="1.1"/><rect x="1.5" y="5.7" width="10" height="3.9" fill="#fbfaf9" stroke="#3b3a39" stroke-width="1.1"/><rect x="1.5" y="0.8" width="18.5" height="4.9" fill="#8cc3ef" stroke="#1f6fc0" stroke-width="1.1"/></g><g transform="translate(1586 274)"><path d="M0.8 0V20.2H20.5" fill="none" stroke="#3b3a39" stroke-width="1.5"/><rect x="6.9" y="8.4" width="3.6" height="11.8" fill="#fbfaf9" stroke="#3b3a39" stroke-width="1.1"/><rect x="10.5" y="11.2" width="3.5" height="9" fill="#c8c6c4" stroke="#8a8886" stroke-width="1.1"/><rect x="15.3" y="5.7" width="4.4" height="14.5" fill="#fbfaf9" stroke="#3b3a39" stroke-width="1.1"/><rect x="2.2" y="0.8" width="4.7" height="19.4" fill="#8cc3ef" stroke="#1f6fc0" stroke-width="1.1"/></g><g transform="translate(1621 274)"><path d="M0.8 0V20.2H20.5" fill="none" stroke="#3b3a39" stroke-width="1.5"/><rect x="1.5" y="2.5" width="3.5" height="5.5" fill="#fbfaf9" stroke="#3b3a39" stroke-width="1.1"/><rect x="5" y="2.5" width="13.5" height="5.5" fill="#8cc3ef" stroke="#1f6fc0" stroke-width="1.1"/><rect x="1.5" y="11.5" width="10.5" height="5.5" fill="#fbfaf9" stroke="#3b3a39" stroke-width="1.1"/><rect x="12" y="11.5" width="6.5" height="5.5" fill="#c8c6c4" stroke="#8a8886" stroke-width="1.1"/></g><g transform="translate(1656 274)"><path d="M0.8 0V20.2H20.5" fill="none" stroke="#3b3a39" stroke-width="1.5"/><rect x="3.2" y="14" width="5.8" height="6.2" fill="#fbfaf9" stroke="#3b3a39" stroke-width="1.1"/><rect x="3.2" y="2" width="5.8" height="12" fill="#8cc3ef" stroke="#1f6fc0" stroke-width="1.1"/><rect x="13" y="9" width="5.8" height="11.2" fill="#fbfaf9" stroke="#3b3a39" stroke-width="1.1"/><rect x="13" y="2" width="5.8" height="7" fill="#c8c6c4" stroke="#8a8886" stroke-width="1.1"/></g><g transform="translate(1481 304)"><path d="M0.8 0V20.2H20.5" fill="none" stroke="#3b3a39" stroke-width="1.5"/><path d="M0.8 11.8L9.3 5L13.7 10.7L20.8 4.2" fill="none" stroke="#3b3a39" stroke-width="1.4"/><path d="M0.8 16.7L13.7 3.6L20.8 10.7" fill="none" stroke="#1f6fc0" stroke-width="1.4"/></g><g transform="translate(1516 304)"><path d="M0.5 12.5L7 1.5L12.5 8.5L6 16Z" fill="#fbfaf9"/><path d="M0.5 12.5L7 1.5L12.5 8.5" fill="none" stroke="#3b3a39" stroke-width="1.3"/><path d="M12 8L16 0.5L20.5 10V20H14Z" fill="#c8c6c4" stroke="#8a8886" stroke-width="1.2"/><path d="M0.5 12.5L6 16L12 8L20.5 20H0.5Z" fill="#8cc3ef" stroke="#1f6fc0" stroke-width="1.3"/></g><g transform="translate(1551 304)"><path d="M0.8 0V20.2H20.5" fill="none" stroke="#3b3a39" stroke-width="1.5"/><path d="M1 2L7 8.5L14 2L20.5 6V15.5L14 8L7 15L1 9Z" fill="#8cc3ef" stroke="#1f6fc0" stroke-width="1.3" stroke-linejoin="round"/></g><g transform="translate(1586 304)"><path d="M0.8 0V20.2H20.5" fill="none" stroke="#3b3a39" stroke-width="1.5"/><rect x="3.5" y="13" width="4.5" height="7.2" fill="#fbfaf9" stroke="#3b3a39" stroke-width="1.1"/><rect x="3.5" y="2" width="4.5" height="11" fill="#8cc3ef" stroke="#1f6fc0" stroke-width="1.1"/><rect x="12" y="9" width="4.5" height="11.2" fill="#fbfaf9" stroke="#3b3a39" stroke-width="1.1"/><rect x="12" y="2" width="4.5" height="7" fill="#c8c6c4" stroke="#8a8886" stroke-width="1.1"/><path d="M1 19L6.5 10L11.5 16L20.5 7" fill="none" stroke="#3b3a39" stroke-width="1.3"/></g><g transform="translate(1621 304)"><path d="M0.8 0V20.2H20.5" fill="none" stroke="#3b3a39" stroke-width="1.5"/><rect x="3" y="9" width="4.5" height="11.2" fill="#8cc3ef" stroke="#1f6fc0" stroke-width="1.1"/><rect x="8.5" y="1" width="4.5" height="19.2" fill="#fbfaf9" stroke="#3b3a39" stroke-width="1.1"/><rect x="13" y="6" width="4" height="14.2" fill="#c8c6c4" stroke="#8a8886" stroke-width="1.1"/><path d="M1 19L6.5 9.5L11.5 17L20.5 6.5" fill="none" stroke="#3b3a39" stroke-width="1.3"/></g><g transform="translate(1656 304)"><path d="M0.8 0V20.2H20.5" fill="none" stroke="#3b3a39" stroke-width="1.5"/><path d="M2 3C6 0 8 8 11 8S16 1 20 3V8C16 6 14 12 11 12S6 4 2 8Z" fill="#c8c6c4" stroke="#8a8886" stroke-width="1.2"/><rect x="2" y="13" width="6" height="3.5" fill="#f0a030" stroke="#d9670d" stroke-width="1"/><rect x="13" y="11" width="6" height="3.5" fill="#f0a030" stroke="#d9670d" stroke-width="1"/><path d="M2 9.5C6 6.5 8 15 11 15S16 8 20 10" fill="none" stroke="#8cc3ef" stroke-width="3.5"/><path d="M2 9.5C6 6.5 8 15 11 15S16 8 20 10" fill="none" stroke="#1f6fc0" stroke-width="1" opacity="0.6"/></g><g transform="translate(1481 334)"><path d="M0.8 0V20.2H20.5" fill="none" stroke="#3b3a39" stroke-width="1.5"/><rect x="2.7" y="6.4" width="5.5" height="13.8" fill="#fbfaf9" stroke="#3b3a39" stroke-width="1.1"/><rect x="8.2" y="6.4" width="3.2" height="6" fill="#8a8886"/><rect x="11.4" y="1" width="2.2" height="11.4" fill="#1f6fc0"/><rect x="13.6" y="1" width="5.9" height="19.2" fill="#fbfaf9" stroke="#3b3a39" stroke-width="1.1"/></g><g transform="translate(1516 334)"><rect x="0.5" y="1" width="20" height="6.5" fill="#8cc3ef" stroke="#1f6fc0" stroke-width="1.3"/><rect x="2.5" y="7.5" width="16" height="6" fill="#8cc3ef" stroke="#1f6fc0" stroke-width="1.3"/><rect x="6" y="13.5" width="8.8" height="6" fill="#8cc3ef" stroke="#1f6fc0" stroke-width="1.3"/></g><g transform="translate(1551 334)"><path d="M0.8 0V20.2H20.5" fill="none" stroke="#3b3a39" stroke-width="1.5"/><rect x="15.3" y="1.2" width="3.3" height="3.5" fill="#3b3a39"/><rect x="3.3" y="14" width="3.5" height="3.5" fill="#3b3a39"/><rect x="3.3" y="4.5" width="3.5" height="3.5" fill="#8cc3ef"/><rect x="9.3" y="8.3" width="3.5" height="3.5" fill="#8cc3ef"/><rect x="15" y="12.4" width="3.5" height="3.5" fill="#8cc3ef"/></g><g transform="translate(1586 334)"><circle cx="10.4" cy="10.4" r="9.8" fill="#fbfaf9" stroke="#3b3a39" stroke-width="1.4"/><path d="M10.4 10.4V0.6A9.8 9.8 0 0 1 17.3 17.3Z" fill="#8cc3ef" stroke="#1f6fc0" stroke-width="1.4" stroke-linejoin="round"/></g><g transform="translate(1621 334)"><circle cx="10.4" cy="10.4" r="7.7" fill="none" stroke="#8cc3ef" stroke-width="4.6"/><circle cx="10.4" cy="10.4" r="9.9" fill="none" stroke="#1f6fc0" stroke-width="1.2"/><circle cx="10.4" cy="10.4" r="5.4" fill="#fbfaf9" stroke="#1f6fc0" stroke-width="1.2"/><path d="M10.4 0.5A9.9 9.9 0 0 0 0.9 13.2L5.3 11.8A5.4 5.4 0 0 1 10.4 5Z" fill="#fbfaf9" stroke="#8a8886" stroke-width="1.1"/></g><g transform="translate(1656 334)"><rect x="0.6" y="0.6" width="19.8" height="19.8" fill="#fbfaf9" stroke="#3b3a39" stroke-width="1.3"/><rect x="1.2" y="1.2" width="9.2" height="18.6" fill="#8cc3ef"/><path d="M10.4 0.6V20.4M1 11.3H10.4M10.4 6.4H20.4M10.4 13.5H20.4M14.8 6.4V20.4" stroke="#1f6fc0" stroke-width="1.1"/><path d="M10.4 6.4H20.4M10.4 13.5H20.4M14.8 6.4V20.4" stroke="#3b3a39" stroke-width="1.1"/></g><g transform="translate(1481 364)"><path d="M9.5 0.8A8.6 8.6 0 0 0 9.5 17.2" fill="none" stroke="#3b3a39" stroke-width="1.6"/><circle cx="11.4" cy="9.5" r="6.9" fill="#fff" stroke="#3b3a39" stroke-width="1.3"/><path d="M6.5 5C8 3.5 10.5 3.3 11 5S9 8 8.5 10S6 12.5 5.2 11C4.8 9 5 6.5 6.5 5ZM12.5 3C15 3 17.5 5 18 7.5C16.5 8.5 14.5 7.5 13.5 6.5S12 4 12.5 3ZM10.5 12C12 10.5 15 11 16 12.5C15.5 14.5 13.5 16 11.5 16C10.5 14.5 10 13 10.5 12Z" fill="#2f9e4f"/><path d="M10.4 16.4V20M3.3 20.2H18.9" stroke="#3b3a39" stroke-width="1.6"/></g><g transform="translate(1516 364)"><path d="M0.5 1L9 1.2V2.5L12 2.3V1H20.5V11.5L19.5 15L16 17.5L12 19.5L9 18.5L5.5 17L1.5 14L0.5 11Z" fill="#c8c6c4" stroke="#3b3a39" stroke-width="1.2"/><path d="M0.5 1L9 1.2L7.5 5L9.5 8.5L0.5 8.5Z" fill="#8cc3ef" stroke="#1f6fc0" stroke-width="1.2"/><path d="M20.5 8.5H12L9.5 12L10 19L12 19.5L16 17.5L19.5 15L20.5 11.5Z" fill="#8cc3ef" stroke="#1f6fc0" stroke-width="1.2"/></g><g transform="translate(1551 364)"><path d="M0.5 1L9 1.2V2.5L12 2.3V1H20.5V11.5L19.5 15L16 17.5L12 19.5L9 18.5L5.5 17L1.5 14L0.5 11Z" fill="#fbfaf9" stroke="#3b3a39" stroke-width="1.2"/><path d="M0.5 1L9 1.2L7.5 5L9.5 8.5L0.5 8.5M20.5 8.5H12L9.5 12L10 19" fill="none" stroke="#1f6fc0" stroke-width="1.2"/></g><g transform="translate(1586 364)"><path d="M0.5 14.5A9.9 9.9 0 0 1 20.3 14.5H16.3A5.9 5.9 0 0 0 4.5 14.5Z" fill="#fbfaf9" stroke="#3b3a39" stroke-width="1.2"/><path d="M10.4 4.6A9.9 9.9 0 0 1 20.3 14.5H16.3A5.9 5.9 0 0 0 10.4 8.6Z" fill="#8cc3ef" stroke="#1f6fc0" stroke-width="1.2"/><path d="M9.5 14L15 9.5" stroke="#3b3a39" stroke-width="2"/></g><rect x="1618.5" y="361.5" width="26" height="26" fill="#c8c6c4" stroke="#605e5c" stroke-width="1.6"/><g transform="translate(1621 364)"><rect x="0.6" y="2.7" width="20" height="14.8" fill="#fbfaf9" stroke="#3b3a39" stroke-width="1.3"/><text x="10.6" y="14" font-size="11" text-anchor="middle" fill="#1f7fd0" font-family="Liberation Sans" letter-spacing="-0.4">123</text><path d="M2.5 15.7H18.5" stroke="#8a8886" stroke-width="0.9"/></g><g transform="translate(1656 364)"><rect x="0.6" y="0.6" width="20" height="20" fill="#fbfaf9" stroke="#3b3a39" stroke-width="1.3"/><path d="M3.8 3.5V17" stroke="#8a8886" stroke-width="1"/><path d="M6 5.9H17.2M6 13H17.2" stroke="#1f6fc0" stroke-width="2"/><path d="M6 8.7H11.5M6 15.8H11.5" stroke="#8a8886" stroke-width="1"/></g><g transform="translate(1481 394)"><rect x="0.6" y="1" width="20" height="17.8" fill="#fbfaf9" stroke="#3b3a39" stroke-width="1.4"/><path d="M2.8 11.2L6 5.4L9.2 11.2Z" fill="#8ad29b" stroke="#2f9e4f" stroke-width="1.1"/><path d="M11.6 5.4H18L14.8 11.2Z" fill="#f1a7a9" stroke="#d13438" stroke-width="1.1"/><path d="M3 14.6H18" stroke="#8a8886" stroke-width="0.9"/></g><g transform="translate(1516 394)"><rect x="0.6" y="0.6" width="19.8" height="19.8" fill="#fbfaf9" stroke="#3b3a39" stroke-width="1.3"/><rect x="1.2" y="1.2" width="18.6" height="3" fill="#8a8886"/><rect x="3.8" y="7.5" width="3.8" height="3.5" fill="none" stroke="#8a8886" stroke-width="1"/><rect x="3.8" y="13.5" width="3.8" height="3.6" fill="none" stroke="#8a8886" stroke-width="1"/><path d="M10.6 11H21.5L17.5 15.8V21.2H14.6V15.8Z" fill="#fbfaf9" stroke="#3b3a39" stroke-width="1.3"/></g><g transform="translate(1551 394)"><rect x="0.6" y="0.6" width="19.8" height="19.8" fill="#fbfaf9" stroke="#3b3a39" stroke-width="1.3"/><rect x="1.2" y="1.2" width="18.6" height="3" fill="#8a8886"/><path d="M7.1 4.2V20M13.5 4.2V20M1 9.3H20M1 14.4H20" stroke="#8a8886" stroke-width="1.1"/></g><g transform="translate(1586 394)"><rect x="0.6" y="0.6" width="19.8" height="19.8" fill="#fbfaf9" stroke="#3b3a39" stroke-width="1.3"/><rect x="1.2" y="1.2" width="18.6" height="3" fill="#8a8886"/><rect x="13.5" y="4.2" width="6.3" height="15.6" fill="#8cc3ef"/><rect x="1.2" y="14.4" width="18.6" height="5.4" fill="#8cc3ef"/><path d="M7.1 4.2V20M13.5 4.2V20M1 9.3H20M1 14.4H20" stroke="#8a8886" stroke-width="1.1"/></g><g transform="translate(1621 394)"><text x="3.8" y="17.8" font-size="19" font-weight="700" fill="#1f7fd0" font-family="Liberation Sans" transform="translate(3.8 0) scale(0.82 1) translate(-3.8 0)">R</text></g><g transform="translate(1656 394)"><text x="-0.3" y="16.2" font-size="19" font-weight="700" fill="#1f7fd0" font-family="Liberation Sans" letter-spacing="-0.6" transform="translate(-0.3 0) scale(0.92 1) translate(0.3 0)">Py</text></g><g transform="translate(1481 424)"><path d="M0.8 0V20.2H20.5" fill="none" stroke="#3b3a39" stroke-width="1.5"/><path d="M0.8 3.7H15M0.8 9.8H10.5M0.8 14.1H6.3" stroke="#1f6fc0" stroke-width="1.3"/><path d="M0.8 9.8H10.5M0.8 14.1H6.3" stroke="#8a8886" stroke-width="1.3"/><circle cx="17" cy="3.7" r="2.4" fill="#8cc3ef" stroke="#1f6fc0" stroke-width="1.2"/><circle cx="12" cy="9.8" r="1.6" fill="#fbfaf9" stroke="#8a8886" stroke-width="1.1"/><circle cx="7.5" cy="14.1" r="1.2" fill="#fbfaf9" stroke="#8a8886" stroke-width="1"/></g><g transform="translate(1516 424)"><rect x="0.4" y="7" width="7.3" height="5.5" fill="#8cc3ef" stroke="#1f6fc0" stroke-width="1.2"/><path d="M7.7 9.8H10.4M10.4 3V17.2M10.4 3H13.1M10.4 9.8H13.1M10.4 17.2H13.1" fill="none" stroke="#3b3a39" stroke-width="1.3"/><rect x="13.1" y="0.5" width="7.5" height="5" fill="#8cc3ef" stroke="#1f6fc0" stroke-width="1.2"/><rect x="13.1" y="7.3" width="7.5" height="5" fill="#8cc3ef" stroke="#1f6fc0" stroke-width="1.2"/><rect x="13.1" y="14.5" width="7.5" height="5" fill="#8cc3ef" stroke="#1f6fc0" stroke-width="1.2"/></g><g transform="translate(1551 424)"><path d="M0.6 1H20.5V14H9.3L3.4 20V14H0.6Z" fill="#fff" stroke="#1f6fc0" stroke-width="1.4" stroke-linejoin="miter"/></g><g transform="translate(1586 424)"><path d="M7.5 0.7H20.3V8.3C18 8.5 16.7 10.3 15.8 12.6S13.4 16.5 13.6 20.2H0.7V12.2H2.8V17.9H11.4C11.2 15.2 11.8 12.8 13.2 10.8S15.2 7.5 15.7 5.8H18.2V2.9H7.5Z" fill="#8cc3ef" stroke="#1f6fc0" stroke-width="1.2" stroke-linejoin="round"/><path d="M-0.6 1.2A1.6 1.6 0 0 1 1 -0.6H4.3A1.6 1.6 0 0 1 5.9 1.2V8.7L2.65 11.6L-0.6 8.7Z" fill="#d9670d"/><circle cx="2.65" cy="3" r="1.3" fill="#fff"/><circle cx="17.9" cy="17.9" r="2.9" fill="#d9670d"/><circle cx="20.1" cy="12.1" r="1.8" fill="#d9670d"/></g><g transform="translate(1621 424)"><path d="M2 16.6L0.8 15.5V5.8A2 2 0 0 1 2.8 3.8H18.6A2 2 0 0 1 20.6 5.8V15.5L19.5 16.6" fill="none" stroke="#3b3a39" stroke-width="1.6"/><path d="M7.3 9.5L10.8 13L7.3 16.5L3.8 13Z" fill="none" stroke="#3b3a39" stroke-width="1.8"/><path d="M13.5 9.2L15.5 11.2L13.5 13.2L11.5 11.2ZM17 12.5L19 14.5L17 16.5L15 14.5ZM13.5 14.5L15.5 16.5L13.5 18.5L11.5 16.5Z" fill="#3b3a39"/></g><g transform="translate(1656 424)"><circle cx="2.8" cy="8.2" r="1.2" fill="#252423"/><circle cx="10.4" cy="8.2" r="1.2" fill="#252423"/><circle cx="17.8" cy="8.2" r="1.2" fill="#252423"/></g></svg><div style="position:absolute;left:1469px;top:449px;width:225px;height:1px;background:#e1dfdd"></div><svg style="position:absolute;left:0px;top:0px;" width="1" height="1" viewBox="0 0 1 1"><path d="M1496 461.5H1516" stroke="#252423" stroke-width="1.3"/><g fill="none" stroke="#252423" stroke-width="1.3" stroke-dasharray="2.2 1.3"><rect x="1496.3" y="465.6" width="24.2" height="7.6"/><rect x="1496.3" y="476.6" width="24.2" height="7.6"/></g></svg><svg style="position:absolute;left:0px;top:0px;" width="1" height="1" viewBox="0 0 1 1"><g fill="none" stroke="#252423" stroke-width="1.3"><rect x="1547.6" y="461.4" width="17.9" height="5.2" rx="1.5"/><path d="M1565.5 463.8H1569.2V470.4H1557.7V474.3"/><rect x="1555" y="474.3" width="5.8" height="11.2" rx="0.8"/></g></svg><svg style="position:absolute;left:0px;top:0px;" width="1" height="1" viewBox="0 0 1 1"><g fill="none" stroke="#252423" stroke-width="1.3"><circle cx="1606.4" cy="471.5" r="10.2"/><path d="M1597 471.3L1601.4 469.2L1605.3 471.9L1614.6 465.5M1613.9 478.6L1621 485.7M1601.4 474.5V481.2M1605.3 475V481.8M1609.2 474V481.2M1612.8 472.5V479.5"/></g></svg><div style="position:absolute;left:1484px;top:491px;width:50px;height:5px;border-radius:3px;background:#f2c811"></div><div id="t53" style="position:absolute;left:1483.04px;top:505.30px;font-size:15px;line-height:15px;color:#252423;font-weight:400;white-space:nowrap;transform:scaleX(0.9607);transform-origin:0 0;">Fields</div><div style="position:absolute;left:1474px;top:529px;width:212px;height:38px;box-sizing:border-box;border:1px dashed #c8c6c4;background:#fff"></div><div style="position:absolute;left:1478px;top:534px;width:205px;height:29px;box-sizing:border-box;border:1px solid #d2d0ce;border-radius:3px;background:#edebe9"></div><div id="t54" style="position:absolute;left:1484.50px;top:542.10px;font-size:15px;line-height:15px;color:#252423;font-weight:400;white-space:nowrap;transform:scaleX(0.9611);transform-origin:0 0;">TotalSalesAmount</div><svg style="position:absolute;left:1643px;top:544px;" width="16" height="9" viewBox="0 0 16 9"><path d="M1 1L8 8L15 1" fill="none" stroke="#252423" stroke-width="1.2"/></svg><svg style="position:absolute;left:1665px;top:543px;" width="12" height="12" viewBox="0 0 12 12"><path d="M1 1L11 11M11 1L1 11" stroke="#252423" stroke-width="1.2"/></svg><div id="t55" style="position:absolute;left:1485.92px;top:587.57px;font-size:20px;line-height:20px;color:#323130;font-weight:400;white-space:nowrap;transform:scaleX(1.0833);transform-origin:0 0;-webkit-text-stroke:0.3px #323130;">Drill through</div><div id="t56" style="position:absolute;left:1480.00px;top:630.73px;font-size:14.5px;line-height:14.5px;color:#252423;font-weight:400;white-space:nowrap;transform:scaleX(1.0305);transform-origin:0 0;">Cross-report</div><div id="t57" style="position:absolute;left:1491.50px;top:666.73px;font-size:14.5px;line-height:14.5px;color:#252423;font-weight:400;white-space:nowrap;transform:scaleX(0.9878);transform-origin:0 0;">Off</div><svg style="position:absolute;left:1515px;top:666px;" width="42" height="17" viewBox="0 0 42 17"><path d="M14 7H37A1.5 1.5 0 0 1 37 10H14Z" fill="none" stroke="#605e5c" stroke-width="1.1"/><circle cx="9.4" cy="8.5" r="6" fill="#fff" stroke="#605e5c" stroke-width="2.6"/></svg><div id="t58" style="position:absolute;left:1478.97px;top:710.73px;font-size:14.5px;line-height:14.5px;color:#252423;font-weight:400;white-space:nowrap;transform:scaleX(1.0276);transform-origin:0 0;">Keep all filters</div><div id="t59" style="position:absolute;left:1491.50px;top:746.73px;font-size:14.5px;line-height:14.5px;color:#252423;font-weight:400;white-space:nowrap;transform:scaleX(0.9596);transform-origin:0 0;">On</div><svg style="position:absolute;left:1515px;top:746px;" width="42" height="17" viewBox="0 0 42 17"><path d="M24 7H2.5A1.5 1.5 0 0 0 2.5 10H24Z" fill="none" stroke="#605e5c" stroke-width="1.1"/><circle cx="31.5" cy="8" r="7.5" fill="#605e5c"/></svg><div style="position:absolute;left:1474px;top:781px;width:212px;height:32px;box-sizing:border-box;border:1px dashed #c8c6c4;background:#fff"></div><div id="t60" style="position:absolute;left:1485.50px;top:790.30px;font-size:15px;line-height:15px;color:#252423;font-weight:400;white-space:nowrap;transform:scaleX(1.0268);transform-origin:0 0;">Add drill-through fields here</div><div style="position:absolute;left:1700px;top:272px;width:214px;height:37px;box-sizing:border-box;border:1px solid #c8c6c4;border-radius:3px;background:#fff"></div><svg style="position:absolute;left:1714px;top:280px;" width="22" height="21" viewBox="0 0 22 21"><circle cx="13.5" cy="7.5" r="6.2" fill="none" stroke="#252423" stroke-width="1.2"/><path d="M9 12L1.2 19.8" stroke="#252423" stroke-width="1.3"/></svg><div id="t61" style="position:absolute;left:1745.50px;top:284.38px;font-size:15.5px;line-height:15.5px;color:#252423;font-weight:400;white-space:nowrap;transform:scaleX(0.9486);transform-origin:0 0;">Search</div><div style="position:absolute;left:1695px;top:314px;width:225px;height:1px;background:#e1dfdd"></div><div style="position:absolute;left:1695px;top:327px;width:225px;height:33px;border-radius:4px 0 0 4px;background:#d2d0ce"></div><svg style="position:absolute;left:1700px;top:338px;" width="16" height="10" viewBox="0 0 16 10"><path d="M1 9L7.5 2L14 9" fill="none" stroke="#252423" stroke-width="1.1"/></svg><svg style="position:absolute;left:1723px;top:335px;" width="26" height="26" viewBox="0 0 26 26"><rect x="1" y="1.5" width="16" height="14" fill="#3b3a39"/><path d="M1 5.5H17M1 9H17M1 12.5H17M5.5 5V15.5M9.5 5V15.5M13.5 5V15.5" stroke="#d2d0ce" stroke-width="1"/><circle cx="17.5" cy="17.3" r="7.5" fill="#f2c811"/><path d="M14.3 17.5L16.6 19.7L20.6 15" fill="none" stroke="#252423" stroke-width="1.6"/></svg><div id="t62" style="position:absolute;left:1754.61px;top:334.88px;font-size:15.5px;line-height:15.5px;color:#252423;font-weight:400;white-space:nowrap;transform:scaleX(0.8875);transform-origin:0 0;">FactSales</div><div style="position:absolute;left:1700px;top:365px;width:213px;height:30px;border-radius:2px;background:#d2d0ce"></div><div style="position:absolute;left:1735px;top:373px;width:15px;height:15px;border-radius:2px;background:#f2c811"></div><svg style="position:absolute;left:1735px;top:373px;" width="15" height="15" viewBox="0 0 15 15"><path d="M3.5 7.7L6.3 10.5L11.5 4.8" fill="none" stroke="#252423" stroke-width="1.3"/></svg><div id="t63" style="position:absolute;left:1756.00px;top:373.88px;font-size:15.5px;line-height:15.5px;color:#252423;font-weight:400;white-space:nowrap;transform:scaleX(1.3333);transform-origin:0 0;">&Sigma;</div><div id="t64" style="position:absolute;left:1782.00px;top:373.88px;font-size:15.5px;line-height:15.5px;color:#252423;font-weight:400;white-space:nowrap;transform:scaleX(0.8987);transform-origin:0 0;">TotalSalesA...</div>
</body></html>
